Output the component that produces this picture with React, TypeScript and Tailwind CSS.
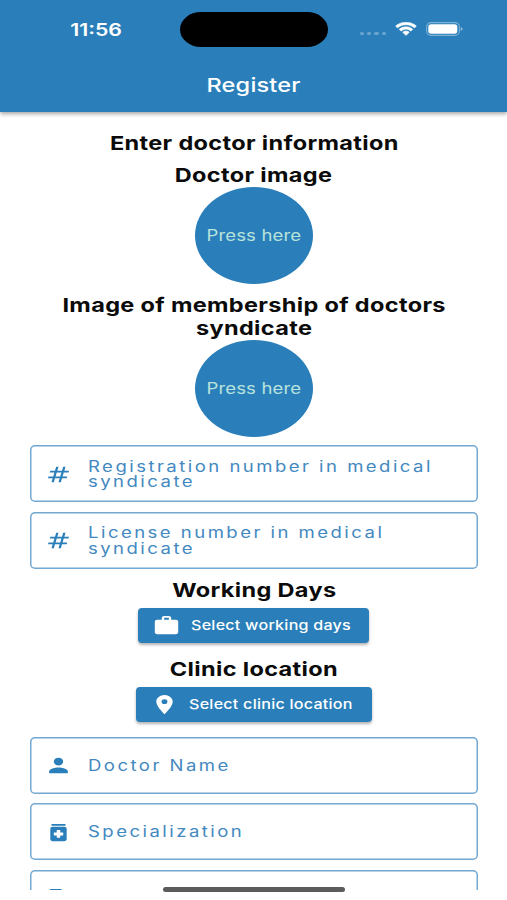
import type { ReactNode } from "react"
import { MdDescription, MdLocationOn, MdMedication, MdNumbers, MdPerson, MdWork } from "react-icons/md"
import type { IconType } from "react-icons"

const fields = {
  registration: [
    { icon: MdNumbers, lines: ["Registration number in medical", "syndicate"] },
    { icon: MdNumbers, lines: ["License number in medical", "syndicate"] },
  ],
  details: [
    { icon: MdPerson, lines: ["Doctor Name"] },
    { icon: MdMedication, lines: ["Specialization"] },
    { icon: MdDescription, lines: [] },
  ],
}

function StatusBar() {
  return (
    <div className="flex h-[59px] items-center">
      <div className="w-[180px] pl-[12px] text-center">
        <span className="inline-block scale-x-[1.23] text-[17.3px] font-semibold">11:56</span>
      </div>
      <div className="h-[35px] w-[148px] rounded-[21px/17.5px] bg-black" />
      <div className="flex flex-1 items-center pb-[2px] pl-[32px]">
        <div className="mt-[10px] flex gap-[3px]">
          {[0, 1, 2, 3].map((dot) => (
            <span key={dot} className="h-[3.5px] w-[4.2px] rounded-[1.5px] bg-white/30" />
          ))}
        </div>
        <svg className="ml-[9px] h-[14px] w-[22px]" viewBox="0 0 17 12" preserveAspectRatio="none" fill="#fff" stroke="#fff" strokeWidth="0.4">
          <path d="M8.5 2.4c2.4 0 4.6.9 6.3 2.5.1.1.3.1.4 0l1.2-1.2c.1-.1.1-.3 0-.4C12-.9 5-.9.6 3.3c-.1.1-.1.3 0 .4l1.2 1.2c.1.1.3.1.4 0C3.9 3.3 6.1 2.4 8.5 2.4z" />
          <path d="M8.5 6.3c1.3 0 2.6.5 3.5 1.4.1.1.3.1.4 0l1.2-1.2c.1-.1.1-.3 0-.4-2.9-2.7-7.3-2.7-10.2 0-.1.1-.1.3 0 .4l1.2 1.2c.1.1.3.1.4 0 .9-.9 2.2-1.4 3.5-1.4z" />
          <path d="M10.9 9c.1-.1.1-.3 0-.4-1.4-1.2-3.4-1.2-4.8 0-.1.1-.1.3 0 .4l2.2 2.3c.1.1.3.1.4 0L10.9 9z" />
        </svg>
        <svg className="ml-[9px] h-[14px] w-[37px]" viewBox="0 0 37 14" fill="none">
          <rect x="0.6" y="0.6" width="32.8" height="12.8" rx="4.4" stroke="#fff" strokeOpacity="0.4" strokeWidth="1.1" />
          <rect x="2.3" y="2.2" width="29" height="9.6" rx="2.8" fill="#fff" />
          <path d="M34.8 5c1.2.5 1.8 1.2 1.8 2s-.6 1.5-1.8 2z" fill="#fff" fillOpacity="0.5" />
        </svg>
      </div>
    </div>
  )
}

function Heading({ children }: { children: ReactNode }) {
  return (
    <h2 className="pt-px text-center text-[19.3px] leading-[23px] font-bold text-[#0b0b0b]">
      <span className="inline-block scale-x-[1.22] tracking-[0.27px] whitespace-nowrap">{children}</span>
    </h2>
  )
}

function ImagePicker() {
  return (
    <button className="flex h-[97px] w-[118px] items-center justify-center rounded-[50%] bg-[#2a7fba] pt-px">
      <span className="scale-x-[1.22] text-[15.2px] tracking-[0.12px] whitespace-nowrap text-[#b9e3dc]">Press here</span>
    </button>
  )
}

function ActionButton({ icon: Icon, label, className }: { icon: IconType; label: string; className: string }) {
  return (
    <button
      className={`flex h-[35px] items-center rounded-[4px] bg-[#2a7fba] text-white shadow-[0_2px_3px_rgba(0,0,0,0.3)] ${className}`}
    >
      <Icon className="size-[23px] scale-x-[1.22]" />
      <span className="ml-[12.5px] origin-left scale-x-[1.22] pt-px text-[13.2px] font-medium tracking-[0.2px] whitespace-nowrap">
        {label}
      </span>
    </button>
  )
}

function Field({ icon: Icon, lines }: { icon: IconType; lines: string[] }) {
  return (
    <div className="flex h-[57px] w-full shrink-0 items-center rounded-[5px] pt-px pl-[17px] text-[#2a7fba] shadow-[inset_0_0_0_1.5px_#72a8d2]">
      <Icon className="size-[23px] shrink-0 scale-x-[1.22]" />
      <div className="ml-[18px] origin-left scale-x-[1.22] text-[15.2px] leading-[15.5px] tracking-[2.02px] whitespace-nowrap text-[#4389bf]">
        {lines.map((line) => (
          <p key={line}>{line}</p>
        ))}
      </div>
    </div>
  )
}

export default function App() {
  return (
    <div className="relative h-[900px] w-[507px] overflow-hidden bg-white font-['Inter','Liberation_Sans',sans-serif]">
      <header className="relative z-10 h-[112px] bg-[#2a7fba] text-white shadow-[0_2px_4px_rgba(0,0,0,0.35)]">
        <StatusBar />
        <h1 className="flex h-[52px] items-center justify-center pl-px text-[19.3px] font-medium">
          <span className="scale-x-[1.22] tracking-[0.15px]">Register</span>
        </h1>
      </header>

      <main className="flex h-[778px] flex-col items-center overflow-hidden pt-[19px] pr-[29px] pl-[30px]">
        <Heading>Enter doctor information</Heading>
        <div className="mt-[8px] flex flex-col items-center">
          <Heading>Doctor image</Heading>
          <ImagePicker />
        </div>
        <div className="mt-[9px] flex flex-col items-center">
          <Heading>
            Image of membership of doctors
            <br />
            syndicate
          </Heading>
          <ImagePicker />
        </div>

        <div className="mt-[8px] flex w-[448px] shrink-0 flex-col gap-[9.5px]">
          {fields.registration.map((field) => (
            <Field key={field.lines[0]} {...field} />
          ))}
        </div>

        <div className="mt-[9px] flex flex-col items-center gap-[6px]">
          <Heading>Working Days</Heading>
          <ActionButton icon={MdWork} label="Select working days" className="mr-px w-[231px] pl-[17px]" />
        </div>
        <div className="mt-[14px] flex flex-col items-center gap-[6px]">
          <Heading>Clinic location</Heading>
          <ActionButton icon={MdLocationOn} label="Select clinic location" className="w-[236px] pl-[17px]" />
        </div>

        <div className="mt-[15px] flex w-[448px] shrink-0 flex-col gap-[9.5px]">
          {fields.details.map((field, index) => (
            <Field key={index} {...field} />
          ))}
        </div>
      </main>

      <div className="absolute top-[887px] left-[163px] h-[5px] w-[182px] rounded-full bg-[#5c5c5c]" />
    </div>
  )
}
